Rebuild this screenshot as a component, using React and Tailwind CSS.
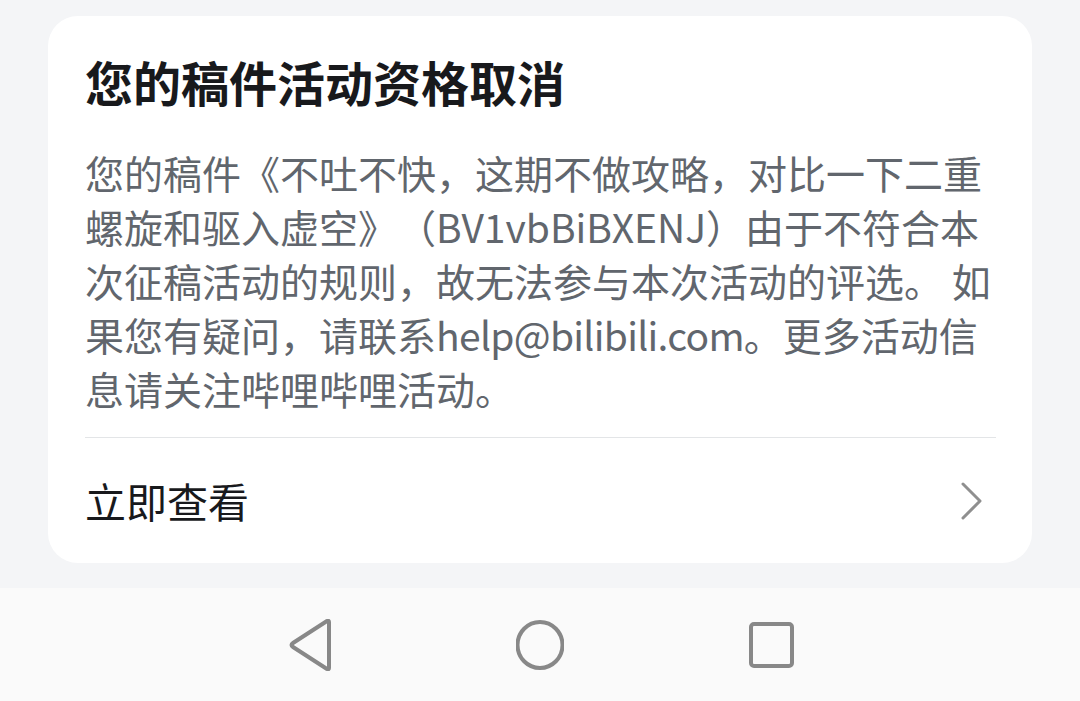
const lines = [
  "您的稿件《不吐不快，这期不做攻略，对比一下二重",
  "螺旋和驱入虚空》（BV1vbBiBXENJ）由于不符合本",
  "次征稿活动的规则，故无法参与本次活动的评选。 如",
  <>
    果您有疑问，请联系<span className="tracking-[-0.7px]">help@bilibili.com</span>。更多活动信
  </>,
  "息请关注哔哩哔哩活动。",
];

export default function App() {
  return (
    <div
      className="flex h-[701px] w-[1080px] flex-col overflow-hidden bg-[#f4f5f7] [text-spacing-trim:space-all]"
      style={{ fontFamily: '"Noto Sans CJK SC", "Noto Sans", sans-serif' }}
    >
      {/* card */}
      <div className="px-[48px] pt-[16px]">
        <div className="rounded-[30px] bg-white pl-[37px] pr-[36px] pt-[37px]">
          <h1 className="text-[48px] font-bold leading-[56px] text-[#18191c]">
            您的稿件活动资格取消
          </h1>
          <div className="mt-[36px] text-[39px] leading-[54px] text-[#61666d]">
            {lines.map((l, i) => (
              <div key={i} className="whitespace-nowrap">
                {l}
              </div>
            ))}
          </div>
          <div className="mt-[22px] h-px bg-[#e3e5e7]" />
          <div className="flex h-[125px] items-center justify-between">
            <span className="text-[41px] text-[#18191c]">立即查看</span>
            <svg width="24" height="40" viewBox="0 0 24 40" className="mr-[12px]">
              <path
                d="M3 3 L20 20 L3 37"
                fill="none"
                stroke="#8f8f8f"
                strokeWidth="3"
                strokeLinecap="round"
                strokeLinejoin="round"
              />
            </svg>
          </div>
        </div>
      </div>

      <div className="flex-1" />

      {/* system nav bar */}
      <div className="flex h-[113px] items-center justify-center gap-[183px] bg-[#fafafa]">
        <svg width="48" height="52" viewBox="0 0 48 52">
          <path
            d="M44 3 L44 49 Q44 51 42 50 L8 28 Q5 26 8 24 L42 2 Q44 1 44 3 Z"
            fill="none"
            stroke="#888"
            strokeWidth="4"
            strokeLinejoin="round"
          />
        </svg>
        <svg width="48" height="52" viewBox="0 0 48 52">
          <ellipse cx="24" cy="26" rx="22.5" ry="23" fill="none" stroke="#888" strokeWidth="4" />
        </svg>
        <svg width="48" height="52" viewBox="0 0 48 52">
          <rect x="4" y="5" width="41" height="42" rx="3" fill="none" stroke="#888" strokeWidth="4" />
        </svg>
      </div>
    </div>
  );
}
